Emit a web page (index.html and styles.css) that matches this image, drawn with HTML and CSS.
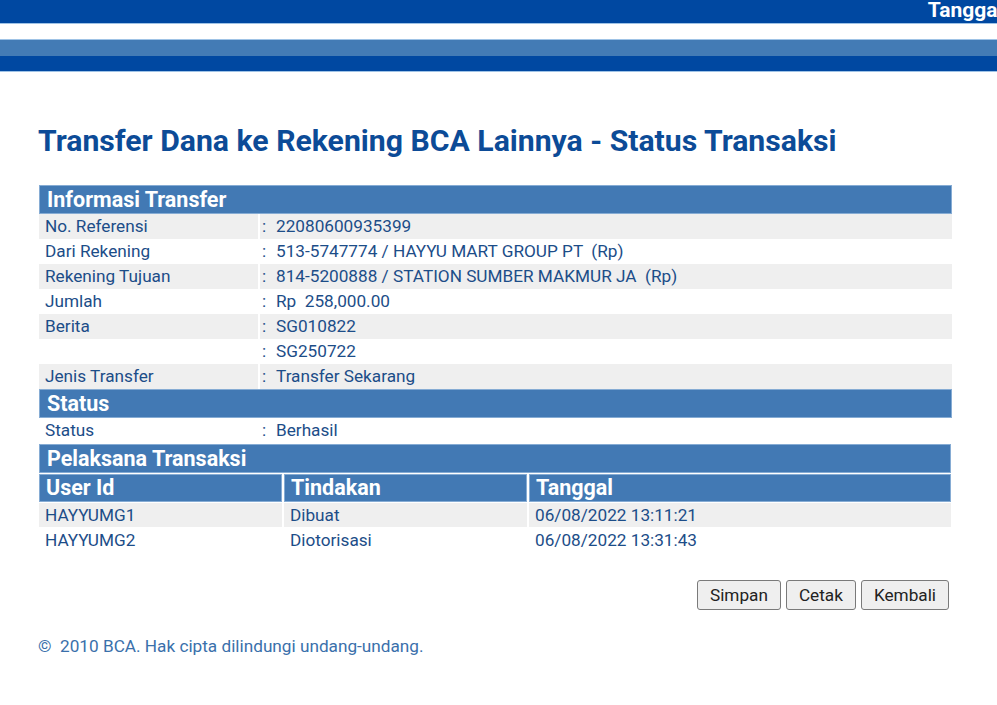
FILE: index.html
```html
<!DOCTYPE html>
<html>
<head>
<meta charset="utf-8">
<link rel="stylesheet" href="styles.css">
</head>
<body>
<header class="topbar">
  <div class="topbar-main"><span class="topbar-date">Tanggal</span></div>
  <div class="topbar-gap"></div>
  <div class="topbar-mid"></div>
  <div class="topbar-low"></div>
</header>
<main class="content">
  <h1 class="title">Transfer Dana ke Rekening BCA Lainnya - Status Transaksi</h1>
  <table class="info">
    <tr><th colspan="2" class="sec">Informasi Transfer</th></tr>
    <tr class="alt"><td class="lbl">No. Referensi</td><td class="val"><span class="colon">:</span>22080600935399</td></tr>
    <tr><td class="lbl">Dari Rekening</td><td class="val"><span class="colon">:</span>513-5747774 / HAYYU MART GROUP PT &nbsp;(Rp)</td></tr>
    <tr class="alt"><td class="lbl">Rekening Tujuan</td><td class="val"><span class="colon">:</span>814-5200888 / STATION SUMBER MAKMUR JA &nbsp;(Rp)</td></tr>
    <tr><td class="lbl">Jumlah</td><td class="val"><span class="colon">:</span>Rp &nbsp;258,000.00</td></tr>
    <tr class="alt"><td class="lbl">Berita</td><td class="val"><span class="colon">:</span>SG010822</td></tr>
    <tr><td class="lbl"></td><td class="val"><span class="colon">:</span>SG250722</td></tr>
    <tr class="alt"><td class="lbl">Jenis Transfer</td><td class="val"><span class="colon">:</span>Transfer Sekarang</td></tr>
    <tr><th colspan="2" class="sec">Status</th></tr>
    <tr><td class="lbl">Status</td><td class="val"><span class="colon">:</span>Berhasil</td></tr>
  </table>
  <table class="exec">
    <colgroup><col class="c1"><col class="c2"><col class="c3"></colgroup>
    <tr><th colspan="3" class="sec">Pelaksana Transaksi</th></tr>
    <tr class="colhead"><th>User Id</th><th>Tindakan</th><th>Tanggal</th></tr>
    <tr class="alt"><td>HAYYUMG1</td><td>Dibuat</td><td>06/08/2022 13:11:21</td></tr>
    <tr><td>HAYYUMG2</td><td>Diotorisasi</td><td>06/08/2022 13:31:43</td></tr>
  </table>
  <div class="actions">
    <button class="btn">Simpan</button>
    <button class="btn">Cetak</button>
    <button class="btn">Kembali</button>
  </div>
  <p class="footer">©&nbsp; 2010 BCA. Hak cipta dilindungi undang-undang.</p>
</main>
</body>
</html>
```

FILE: styles.css
```css
html, body {
  margin: 0;
  padding: 0;
  background: #ffffff;
  font-family: Roboto, "Liberation Sans", sans-serif;
}

.topbar {
  display: flex;
  flex-direction: column;
}
.topbar-main {
  height: 23px;
  background: #0048a1;
  border-bottom: 1px solid #9fc3e6;
  display: flex;
  justify-content: flex-end;
  overflow: hidden;
}
.topbar-date {
  color: #ffffff;
  font-weight: 700;
  font-size: 21px;
  line-height: 21px;
  margin-right: -6px;
  white-space: nowrap;
}
.topbar-gap {
  height: 15px;
  background: #ffffff;
  border-bottom: 1px solid #9fc3e6;
}
.topbar-mid {
  height: 16px;
  background: #437bb5;
}
.topbar-low {
  height: 15px;
  background: #0048a1;
  border-bottom: 1px solid #9fc3e6;
}

.content {
  padding: 0 0 0 38px;
}

.title {
  margin: 52px 0 0 0;
  font-size: 30.2px;
  line-height: 34px;
  font-weight: 700;
  color: #0c4b97;
}

table {
  border-collapse: separate;
  border-spacing: 0;
}
.info {
  width: 913px;
  margin-top: 27px;
  margin-left: 1px;
}
.sec {
  background: #4279b4;
  color: #ffffff;
  font-size: 21.5px;
  font-weight: 700;
  text-align: left;
  padding: 0 0 0 7px;
  line-height: 27px;
  border: 1px solid #86acd4;
}
td {
  height: 25px;
  padding: 0;
  font-size: 17.2px;
  color: #1c4d88;
  line-height: 25px;
  white-space: nowrap;
}
tr.alt td {
  background: #efefef;
}
.lbl {
  width: 213px;
  padding-left: 6px;
  border-right: 2px solid #ffffff;
}
.val {
  padding-left: 2px;
}
.colon {
  display: inline-block;
  width: 14px;
}

.exec {
  table-layout: fixed;
  width: 916px;
  border-spacing: 2px 1px;
  margin: 0 0 0 -1px;
}
.exec .c1 { width: 243px; }
.exec .c2 { width: 243px; }
.exec td {
  height: 24px;
  line-height: 24px;
  padding-left: 6px;
}
.colhead th {
  background: #4279b4;
  color: #ffffff;
  font-size: 21.5px;
  font-weight: 700;
  text-align: left;
  line-height: 26px;
  padding: 0 0 0 6px;
  border: 1px solid #86acd4;
}

.actions {
  display: flex;
  justify-content: flex-end;
  gap: 5px;
  width: 911px;
  margin-top: 27px;
}
.btn {
  font-family: Roboto, "Liberation Sans", sans-serif;
  font-size: 17.2px;
  color: #222222;
  background: #efefef;
  border: 1px solid #7a7a7a;
  border-radius: 3px;
  height: 30px;
  padding: 0 12px;
}

.footer {
  margin: 26px 0 0 0;
  font-size: 17.2px;
  line-height: 20px;
  color: #3a70ab;
}
```
